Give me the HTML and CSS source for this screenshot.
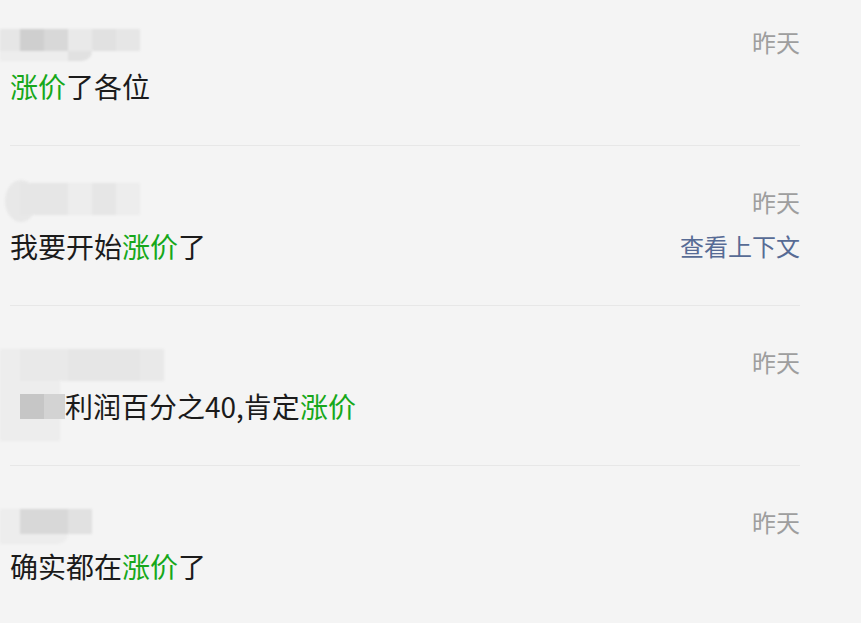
FILE: index.html
```html
<!DOCTYPE html>
<html>
<head>
    <meta charset="utf-8">
    <title>搜索聊天记录</title>
    <link rel="stylesheet" href="styles.css">
</head>
<body>
    <div class="list">

        <div class="item">
            <div class="head">
                <div class="mask">
                    <div class="mrow">
                        <span class="px w20 g4"></span><span class="px g1"></span><span class="px g2"></span><span class="px g5"></span><span class="px g3"></span><span class="px g4"></span>
                    </div>
                    <div class="mrow low">
                        <span class="px w68 g6"></span><span class="px g3 round"></span>
                    </div>
                </div>
                <span class="date">昨天</span>
            </div>
            <div class="body">
                <p class="msg"><em>涨价</em>了各位</p>
            </div>
        </div>

        <div class="item">
            <div class="head">
                <div class="mask up">
                    <span class="blob"></span>
                    <div class="mrow shift">
                        <span class="px h32 g4"></span><span class="px h32 g4"></span><span class="px h32 g6"></span><span class="px h32 g4"></span><span class="px h32 g6"></span>
                    </div>
                </div>
                <span class="date">昨天</span>
            </div>
            <div class="body">
                <p class="msg">我要开始<em>涨价</em>了</p>
                <a class="ctx" href="#">查看上下文</a>
            </div>
        </div>

        <div class="item">
            <div class="head">
                <div class="mask">
                    <div class="mrow">
                        <span class="px h32 w20 g6"></span><span class="px h32 g5"></span><span class="px h32 g5"></span><span class="px h32 g4"></span><span class="px h32 w48 g4"></span><span class="px h32 g5"></span>
                    </div>
                    <div class="mrow">
                        <span class="px w60 tall g6"></span>
                    </div>
                </div>
                <span class="date">昨天</span>
            </div>
            <div class="body">
                <p class="msg"><span class="inmask"><span class="px dark"></span><span class="px w21 mid"></span></span>利润百分之40,肯定<em>涨价</em></p>
            </div>
        </div>

        <div class="item">
            <div class="head">
                <div class="mask">
                    <div class="mrow">
                        <span class="px h25 w20 g6"></span><span class="px h25 g2"></span><span class="px h25 g2"></span><span class="px h25 g3"></span>
                    </div>
                    <div class="mrow low">
                        <span class="px w68 g6 round"></span>
                    </div>
                </div>
                <span class="date">昨天</span>
            </div>
            <div class="body">
                <p class="msg">确实都在<em>涨价</em>了</p>
            </div>
        </div>

    </div>
</body>
</html>
```

FILE: styles.css
```css
html, body { margin: 0; padding: 0; background: #f4f4f4; }
body { font-family: "Noto Sans CJK SC", "Microsoft YaHei", sans-serif; color: #1b1b1b; overflow: hidden; }

.list { width: 790px; margin: -15px 0 0 10px; }
.item { height: 160px; padding-top: 41px; box-sizing: border-box; }
.item + .item { border-top: 1px solid #e7e7e7; padding-top: 40px; }

.head { display: flex; justify-content: space-between; align-items: flex-start; height: 32px; }
.date { font-size: 24px; line-height: 32px; color: #9e9e9e; }

.body { display: flex; justify-content: space-between; align-items: center; margin-top: 8px; height: 40px; }
.msg { margin: 0; font-size: 28px; line-height: 40px; white-space: nowrap; }
.msg em { font-style: normal; color: #16a81b; }
.ctx { font-size: 24px; line-height: 40px; color: #576b95; text-decoration: none; }

/* blurred nickname */
.mask { margin: 3px 0 0 -10px; filter: blur(1px); height: 32px; }
.mask.up { margin-top: -6px; }
.mrow { display: flex; }
.mrow.shift { margin: -39px 0 0 20px; }
.mrow.low .px { height: 10px; }
.px { display: inline-block; width: 24px; height: 22px; }
.h25 { height: 25px; }
.h32 { height: 32px; }
.tall { height: 60px; }
.w20 { width: 20px; }
.w21 { width: 21px; }
.w48 { width: 48px; }
.w60 { width: 60px; }
.w68 { width: 68px; }
.round { border-radius: 0 0 10px 0; }
.blob { display: block; width: 32px; height: 42px; margin-left: 5px; border-radius: 50%; background: #e8e8e8; }
.g1 { background: #cfcfcf; }
.g2 { background: #d8d8d8; }
.g3 { background: #e1e1e1; }
.g4 { background: #e6e6e6; }
.g5 { background: #e9e9e9; }
.g6 { background: #ededed; }

.inmask { display: inline-flex; vertical-align: middle; margin: -8px 0 0 10px; filter: blur(0.5px); }
.inmask .px { height: 25px; }
.dark { background: #c6c6c6; }
.mid { background: #d3d3d3; }
```
